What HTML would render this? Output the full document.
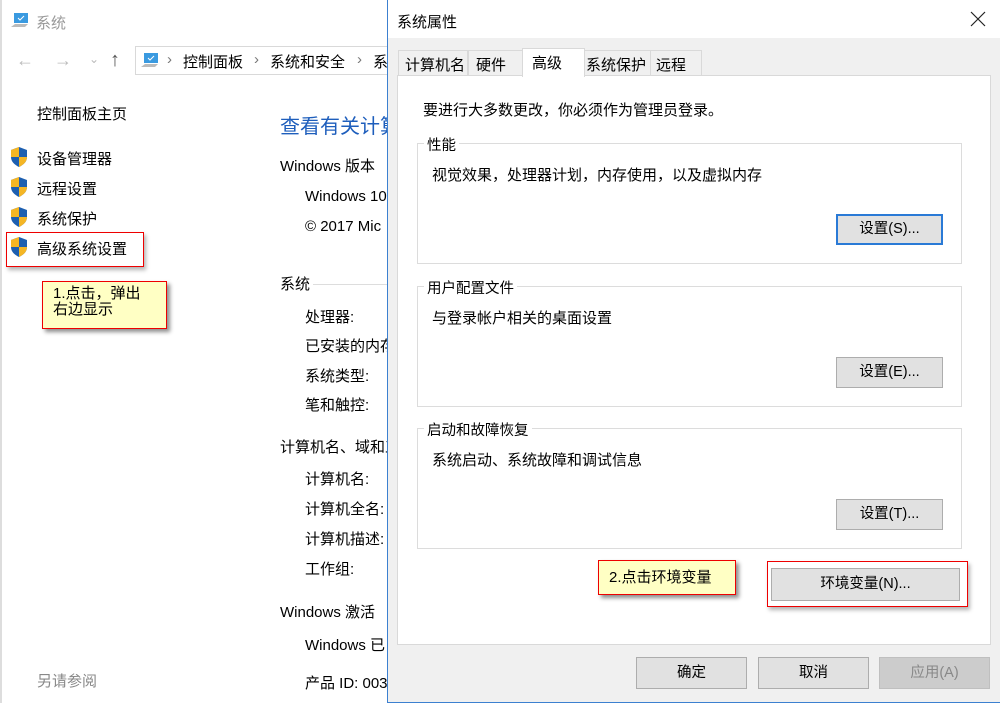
<!DOCTYPE html><html><head><meta charset="utf-8"><style>
*{margin:0;padding:0;box-sizing:border-box}
body{width:1000px;height:703px;overflow:hidden;background:#fff;font-family:"Liberation Sans","Noto Sans CJK SC",sans-serif;font-size:15px;color:#000;position:relative}
.a{position:absolute;white-space:nowrap}
.sh{position:absolute;width:20px;height:22px}
.btn{position:absolute;background:#e1e1e1;border:1px solid #adadad;text-align:center;font-size:14.5px}
.grp{position:absolute;border:1px solid #dcdcdc;background:#fff}
.gl{position:absolute;top:-10px;left:6px;background:#fff;padding:0 3px;font-size:14.5px}
</style></head><body>
<div class="a" style="left:0;top:0;width:2px;height:703px;background:#ddd"></div>
<svg class="a" style="left:10px;top:12px" width="20" height="18"><rect x="4" y="1" width="14" height="10" fill="#3a9ae0"/><path d="M8 6l2 2 4-4" stroke="#fff" fill="none"/><path d="M1 15l4-3h13l-3 3z" fill="#bbb"/></svg>
<div class="a" style="left:36px;top:12px;color:#999">系统</div>
<div class="a" style="left:16px;top:50px;color:#bbb;font-size:18px">←</div>
<div class="a" style="left:54px;top:50px;color:#bbb;font-size:18px">→</div>
<div class="a" style="left:89px;top:52px;color:#bbb;font-size:12px">⌄</div>
<div class="a" style="left:110px;top:49px;color:#555;font-size:20px">↑</div>
<div class="a" style="left:135px;top:46px;width:260px;height:29px;border:1px solid #d9d9d9"></div>
<svg class="a" style="left:140px;top:52px" width="20" height="18"><rect x="4" y="1" width="14" height="10" fill="#3a9ae0"/><path d="M8 6l2 2 4-4" stroke="#fff" fill="none"/><path d="M1 15l4-3h13l-3 3z" fill="#bbb"/></svg>
<div class="a" style="left:167px;top:51px;color:#777">›</div>
<div class="a" style="left:183px;top:51px">控制面板</div>
<div class="a" style="left:254px;top:51px;color:#777">›</div>
<div class="a" style="left:270px;top:51px">系统和安全</div>
<div class="a" style="left:357px;top:51px;color:#777">›</div>
<div class="a" style="left:373px;top:51px">系</div>
<div class="a" style="left:37px;top:103px">控制面板主页</div>
<svg width="0" height="0" style="position:absolute"><defs><g id="s"><path d="M10 1L2 4v7c0 5 4 8 8 10 4-2 8-5 8-10V4z" fill="#1d5fb0"/><path d="M10 1v10H2V4z" fill="#f5b624"/><path d="M10 11h8c0 5-4 8-8 10z" fill="#f5b624"/></g></defs></svg>
<svg class="sh" style="left:9px;top:146px"><use href="#s"/></svg>
<svg class="sh" style="left:9px;top:176px"><use href="#s"/></svg>
<svg class="sh" style="left:9px;top:206px"><use href="#s"/></svg>
<svg class="sh" style="left:9px;top:236px"><use href="#s"/></svg>
<div class="a" style="left:37px;top:148px">设备管理器</div>
<div class="a" style="left:37px;top:178px">远程设置</div>
<div class="a" style="left:37px;top:208px">系统保护</div>
<div class="a" style="left:37px;top:238px">高级系统设置</div>
<div class="a" style="left:6px;top:232px;width:138px;height:35px;border:1px solid #e00;box-shadow:2px 3px 4px rgba(0,0,0,.3)"></div>
<div class="a" style="left:42px;top:281px;width:125px;height:48px;border:1px solid #e00;background:#ffffc4;box-shadow:3px 3px 4px rgba(0,0,0,.45);padding:4px 10px;line-height:16px;font-size:15px;white-space:normal">1.点击，弹出<br>右边显示</div>
<div class="a" style="left:280px;top:110px;color:#1e5ebc;font-size:20px">查看有关计算</div>
<div class="a" style="left:280px;top:155px">Windows 版本</div>
<div class="a" style="left:305px;top:188px">Windows 10</div>
<div class="a" style="left:305px;top:218px">© 2017 Mic</div>
<div class="a" style="left:280px;top:273px">系统</div>
<div class="a" style="left:313px;top:284px;width:80px;height:1px;background:#ddd"></div>
<div class="a" style="left:305px;top:306px">处理器:</div>
<div class="a" style="left:305px;top:335px">已安装的内存</div>
<div class="a" style="left:305px;top:365px">系统类型:</div>
<div class="a" style="left:305px;top:394px">笔和触控:</div>
<div class="a" style="left:280px;top:436px">计算机名、域和工</div>
<div class="a" style="left:305px;top:468px">计算机名:</div>
<div class="a" style="left:305px;top:498px">计算机全名:</div>
<div class="a" style="left:305px;top:528px">计算机描述:</div>
<div class="a" style="left:305px;top:558px">工作组:</div>
<div class="a" style="left:280px;top:601px">Windows 激活</div>
<div class="a" style="left:305px;top:634px">Windows 已</div>
<div class="a" style="left:37px;top:670px;color:#888">另请参阅</div>
<div class="a" style="left:305px;top:672px">产品 ID: 003</div>
<div class="a" style="left:387px;top:0;width:613px;height:703px;background:#f0f0f0;border-left:1px solid #3c80d0;border-bottom:1px solid #3c80d0"></div>
<div class="a" style="left:388px;top:0;width:612px;height:38px;background:#fff"></div>
<div class="a" style="left:397px;top:11px">系统属性</div>
<svg class="a" style="left:970px;top:11px" width="16" height="16"><path d="M1 1L15 15M15 1L1 15" stroke="#222" stroke-width="1.2"/></svg>
<div class="a" style="left:397px;top:75px;width:594px;height:570px;background:#fff;border:1px solid #d9d9d9"></div>
<div class="a" style="left:398px;top:50px;width:70px;height:26px;border:1px solid #d9d9d9;background:#f0f0f0;padding:3px 0 0 6px">计算机名</div>
<div class="a" style="left:468px;top:50px;width:55px;height:26px;border:1px solid #d9d9d9;background:#f0f0f0;padding:3px 0 0 7px">硬件</div>
<div class="a" style="left:522px;top:48px;width:63px;height:29px;border:1px solid #d9d9d9;border-bottom:none;background:#fff;padding:3px 0 0 9px">高级</div>
<div class="a" style="left:584px;top:50px;width:67px;height:26px;border:1px solid #d9d9d9;background:#f0f0f0;padding:3px 0 0 1px">系统保护</div>
<div class="a" style="left:650px;top:50px;width:52px;height:26px;border:1px solid #d9d9d9;background:#f0f0f0;padding:3px 0 0 5px">远程</div>
<div class="a" style="left:423px;top:99px">要进行大多数更改，你必须作为管理员登录。</div>
<div class="grp" style="left:417px;top:143px;width:545px;height:121px"><span class="gl">性能</span></div>
<div class="a" style="left:432px;top:164px">视觉效果，处理器计划，内存使用，以及虚拟内存</div>
<div class="btn" style="left:836px;top:214px;width:107px;height:31px;border:2px solid #2a7ad6;line-height:27px">设置(S)...</div>
<div class="grp" style="left:417px;top:286px;width:545px;height:121px"><span class="gl">用户配置文件</span></div>
<div class="a" style="left:432px;top:307px">与登录帐户相关的桌面设置</div>
<div class="btn" style="left:836px;top:357px;width:107px;height:31px;line-height:29px">设置(E)...</div>
<div class="grp" style="left:417px;top:428px;width:545px;height:121px"><span class="gl">启动和故障恢复</span></div>
<div class="a" style="left:432px;top:449px">系统启动、系统故障和调试信息</div>
<div class="btn" style="left:836px;top:499px;width:107px;height:31px;line-height:29px">设置(T)...</div>
<div class="a" style="left:598px;top:560px;width:138px;height:35px;border:1px solid #e00;background:#ffffc4;box-shadow:3px 3px 4px rgba(0,0,0,.45);padding:5px 10px">2.点击环境变量</div>
<div class="a" style="left:767px;top:561px;width:201px;height:46px;border:1px solid #e00;box-shadow:2px 3px 4px rgba(0,0,0,.3)"></div>
<div class="btn" style="left:771px;top:568px;width:189px;height:33px;line-height:31px">环境变量(N)...</div>
<div class="btn" style="left:636px;top:657px;width:111px;height:32px;line-height:30px">确定</div>
<div class="btn" style="left:758px;top:657px;width:111px;height:32px;line-height:30px">取消</div>
<div class="btn" style="left:879px;top:657px;width:111px;height:32px;line-height:30px;background:#ccc;border-color:#bfbfbf;color:#888">应用(A)</div>
</body></html>
